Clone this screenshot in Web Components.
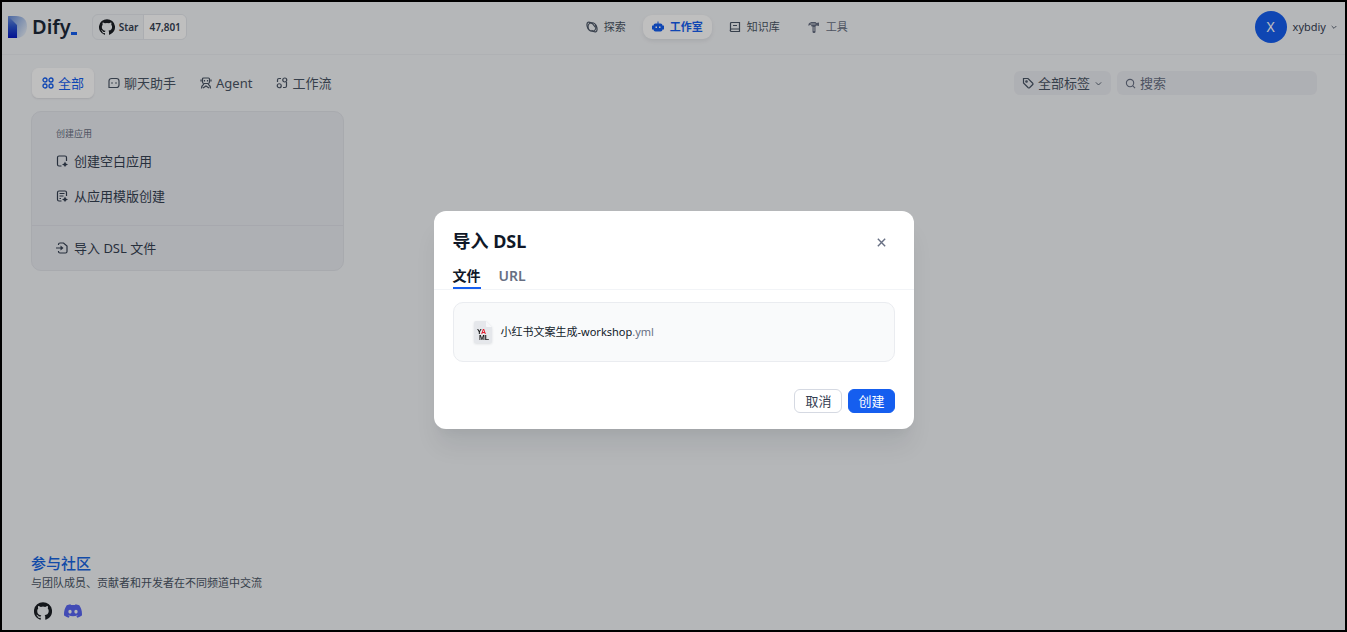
<!DOCTYPE html>
<html lang="zh-CN">
<head>
<meta charset="utf-8">
<meta name="viewport" content="width=device-width, initial-scale=1">
<title>Dify</title>
<style>
  html, body { margin: 0; }
  body { font-family: "Noto Sans", "Noto Sans CJK SC", sans-serif; color: #354052; }
</style>
</head>
<body>
<dify-app></dify-app>
<script>
const define = (name, html, setup) => customElements.define(name, class extends HTMLElement {
  connectedCallback() {
    if (this.shadowRoot) return;
    const t = document.createElement('template');
    t.innerHTML = html;
    this.attachShadow({ mode: 'open' }).append(t.content.cloneNode(true));
    if (setup) setup(this, this.shadowRoot);
  }
});

const GITHUB = '<path fill="currentColor" d="M12 .3a12 12 0 0 0-3.8 23.4c.6.1.8-.3.8-.6v-2c-3.3.7-4-1.6-4-1.6-.6-1.4-1.4-1.8-1.4-1.8-1-.7.1-.7.1-.7 1.2 0 1.9 1.2 1.9 1.2 1 1.8 2.8 1.3 3.5 1 0-.8.4-1.3.7-1.6-2.7-.3-5.5-1.3-5.5-6 0-1.2.5-2.3 1.3-3.1-.2-.4-.6-1.6 0-3.2 0 0 1-.3 3.4 1.2a11.5 11.5 0 0 1 6 0c2.3-1.5 3.3-1.2 3.3-1.2.6 1.6.2 2.8 0 3.2.9.8 1.3 1.9 1.3 3.2 0 4.6-2.8 5.6-5.5 5.9.5.4.9 1 .9 2.2v3.3c0 .3.1.7.8.6A12 12 0 0 0 12 .3"/>';
const ICONS = {
  github: GITHUB,
  discord: '<path fill="currentColor" d="M20.317 4.37a19.8 19.8 0 0 0-4.885-1.515.07.07 0 0 0-.079.037c-.21.375-.444.864-.608 1.25a18.3 18.3 0 0 0-5.487 0 12.6 12.6 0 0 0-.617-1.25.08.08 0 0 0-.079-.037A19.7 19.7 0 0 0 3.677 4.37a.07.07 0 0 0-.032.027C.533 9.046-.32 13.58.099 18.057a.08.08 0 0 0 .031.057 19.9 19.9 0 0 0 5.993 3.03.08.08 0 0 0 .084-.028c.462-.63.874-1.295 1.226-1.994a.076.076 0 0 0-.041-.106 13 13 0 0 1-1.872-.892.077.077 0 0 1-.008-.128l.372-.292a.07.07 0 0 1 .077-.01c3.928 1.793 8.18 1.793 12.062 0a.07.07 0 0 1 .078.01l.373.292a.077.077 0 0 1-.006.127 12.3 12.3 0 0 1-1.873.892.077.077 0 0 0-.041.107c.36.698.772 1.362 1.225 1.993a.08.08 0 0 0 .084.028 19.8 19.8 0 0 0 6.002-3.03.08.08 0 0 0 .032-.054c.5-5.177-.838-9.674-3.549-13.66a.06.06 0 0 0-.031-.03zM8.02 15.33c-1.183 0-2.157-1.085-2.157-2.419s.956-2.419 2.157-2.419c1.21 0 2.176 1.096 2.157 2.42 0 1.333-.956 2.418-2.157 2.418zm7.975 0c-1.183 0-2.157-1.085-2.157-2.419s.955-2.419 2.157-2.419c1.21 0 2.176 1.096 2.157 2.42 0 1.333-.946 2.418-2.157 2.418z"/>',
  explore: '<g><ellipse cx="12" cy="12" rx="8" ry="8.500"/><path d="M5 17C1 11 1 4 4 2.500 7 1.500 10 3 13 5.500L19 13M19 7c4 6 4 13 1 14.500-3 1-6-.5-9-3"/></g>',
  robot: '<g fill="currentColor" stroke="none"><path d="M11 1h2v4h4a4 4 0 0 1 4 4v8a4 4 0 0 1-4 4H7a4 4 0 0 1-4-4V9a4 4 0 0 1 4-4h4z"/><rect x="0" y="9" width="4" height="8" rx="1"/><rect x="20" y="9" width="4" height="8" rx="1"/><rect x="7" y="11" width="3" height="3" fill="#fff"/><rect x="14" y="11" width="3" height="3" fill="#fff"/></g>',
  book: '<path d="M3 20V5a2 2 0 0 1 2-2h16v18H5a2 2 0 0 1 0-5h16M8 9h8"/>',
  tool: '<path fill="currentColor" stroke="none" d="M1 10V6c2-3 5-4 8-4h6l2 2 5-1v7l-5-1-2 2v11c0 3-6 3-6 0V11H7C7 8 4 7 1 10z"/><path stroke="#f2f4f7" stroke-width="1.500" d="M5 6h10M12 12v8"/>',
  down: '<path d="m5 9 7 7 7-7"/>',
  all: '<g stroke-width="2.600"><circle cx="6" cy="6" r="4"/><circle cx="18" cy="6" r="4"/><circle cx="6" cy="18" r="4"/><circle cx="18" cy="18" r="4"/></g>',
  chat: '<path d="M2 21V8a5 5 0 0 1 5-5h10a5 5 0 0 1 5 5v8a5 5 0 0 1-5 5zM8 10.500v3M16 10.500v3"/>',
  agent: '<path d="M7 2h10a2 2 0 0 1 2 2v6a3 3 0 0 1-3 3H8a3 3 0 0 1-3-3V4a2 2 0 0 1 2-2zM9 6v3M15 6v3M2 5v4M22 5v4M3 23c0-4 2-7 5-9M21 23c0-4-2-7-5-9M6 22l6-4 6 4"/>',
  flow: '<path d="M10 3H6a3 3 0 0 0-3 3v4M14 21h4a3 3 0 0 0 3-3v-8"/><circle cx="17.500" cy="6" r="4"/><circle cx="6.500" cy="17.500" r="4"/>',
  tag: '<path d="M3 3h9l9.500 9.500a2 2 0 0 1 0 2.500L15 21.500a2 2 0 0 1-2.500 0L3 12z"/><circle cx="9" cy="9" r="1.500"/>',
  search: '<circle cx="11" cy="11" r="8"/><path d="m17 17 5 5"/>',
  blank: '<path d="M11 22H6a3 3 0 0 1-3-3V5a3 3 0 0 1 3-3h12a3 3 0 0 1 3 3v7"/><path fill="currentColor" stroke="none" d="m18 13 2 4 4 2-4 2-2 3-2-3-4-2 4-2z"/>',
  template: '<path d="M11 22H6a3 3 0 0 1-3-3V5a3 3 0 0 1 3-3h12a3 3 0 0 1 3 3v7M7 7h10M7 12h8M7 17h3"/><path fill="currentColor" stroke="none" d="m18 13 2 4 4 2-4 2-2 3-2-3-4-2 4-2z"/>',
  import: '<path d="M5 6V5a3 3 0 0 1 3-3h7l7 6v11a3 3 0 0 1-3 3H8a3 3 0 0 1-3-3v-1M0 12h12"/><path fill="currentColor" stroke="none" d="m9 7 6 5-6 5z"/>',
  close: '<path stroke-width="3" d="m4 4 16 16M20 4 4 20"/>'
};

define('ui-icon', `<style>
  :host { display: block; flex: none; width: var(--size, 12px); height: var(--size, 12px); }
  svg { display: block; width: 100%; height: 100%; }
</style>`, (host, root) => {
  const name = host.getAttribute('name');
  const stroke = name === 'github' || name === 'discord' ? 'none' : 'currentColor';
  root.innerHTML += `<svg viewBox="0 0 24 24" fill="none" stroke="${stroke}" stroke-width="2.400" aria-hidden="true">${ICONS[name]}</svg>`;
});

define('dify-logo', `<style>
  :host { display: block; }
  a { display: flex; align-items: center; gap: 5px; color: #1d2939; text-decoration: none; font-size: 20px; line-height: 24px; font-weight: 600; }
  svg { display: block; width: 19px; height: 22px; }
  .word { display: flex; align-items: center; }
  i { width: 6px; height: 3px; margin-top: 12px; background: #155eef; }
</style>
<a href="#" aria-label="Dify">
  <svg viewBox="0 0 19 22"><defs>
    <linearGradient id="bar" x1="0" y1="0" x2="0" y2="1"><stop offset="0" stop-color="#6f93dd"/><stop offset=".5" stop-color="#2a54d0"/><stop offset="1" stop-color="#0618c4"/></linearGradient>
    <linearGradient id="bow" x1="0" y1="0" x2="1" y2=".7"><stop offset="0" stop-color="#6389da"/><stop offset=".5" stop-color="#a3bce8"/><stop offset="1" stop-color="#e2eaf6"/></linearGradient></defs>
    <path fill="url(#bow)" d="M0 0h8c7 0 11 4 11 10.500S15 22 9 22z"/><path fill="url(#bar)" d="M0 0 9 9v13H0z"/>
  </svg>
  <span class="word">Dify<i></i></span>
</a>`);

define('github-star', `<style>
  :host { display: block; }
  a { display: flex; box-sizing: border-box; height: 26px; border: 1px solid #e4e7ec; border-radius: 6px; overflow: hidden; color: #354052; text-decoration: none; font-size: 10px; line-height: 24px; font-weight: 600; }
  span { display: flex; align-items: center; gap: 4px; padding: 0 5px 0 6px; }
  .count { background: #fff; border-left: 1px solid #e4e7ec; padding: 0 5px; }
  ui-icon { --size: 16px; color: #1b1f24; }
</style>
<a href="#"><span><ui-icon name="github"></ui-icon>Star</span><span class="count">47,801</span></a>`);

define('nav-item', `<style>
  :host { display: block; }
  a { display: flex; align-items: center; gap: 6px; height: 24px; padding: 0 11px; border-radius: 9px; color: #495464; text-decoration: none; font-size: 11px; line-height: 24px; font-weight: 400; }
  :host([active]) a { background: #fff; color: #155eef; font-weight: 700; box-shadow: 0 2px 4px #10182814; padding: 0 9px; }
  :host([muted]) a { color: #676f83; }
</style>
<a href="#"><ui-icon></ui-icon><slot></slot></a>`, (h, r) => r.querySelector('ui-icon').replaceWith(Object.assign(document.createElement('template'), { innerHTML: `<ui-icon name="${h.getAttribute('icon')}"></ui-icon>` }).content));

define('app-header', `<style>
  :host { display: block; border-bottom: 1px solid #eaecf0; }
  header { display: flex; align-items: center; justify-content: space-between; height: 50px; padding: 0 7px 2px 6px; }
  .left { display: flex; align-items: center; gap: 15px; }
  nav { display: flex; gap: 6px; }
  button { display: flex; align-items: center; gap: 6px; border: 0; padding: 0 0 0 8px; background: none; color: #354052; font: inherit; font-size: 11px; line-height: 20px; }
  .avatar { width: 32px; height: 32px; border-radius: 16px; background: #155eef; color: #fff; text-align: center; font-size: 14px; line-height: 32px; }
  .name { display: flex; align-items: center; gap: 4px; }
  .name ui-icon { --size: 8px; }
</style>
<header>
  <div class="left"><dify-logo></dify-logo><github-star></github-star></div>
  <nav>
    <nav-item icon="explore">探索</nav-item>
    <nav-item icon="robot" active>工作室</nav-item>
    <nav-item icon="book">知识库</nav-item>
    <nav-item icon="tool" muted>工具</nav-item>
  </nav>
  <button type="button"><span class="avatar">X</span><span class="name">xybdiy<ui-icon name="down"></ui-icon></span></button>
</header>`);

define('type-tab', `<style>
  :host { display: block; }
  button { display: flex; align-items: center; gap: 4px; height: 30px; padding: 0 9px; border: 1px solid transparent; border-radius: 6px; background: none; color: #495464; font: inherit; font-size: 13px; line-height: 20px; }
  :host([active]) button { background: #fff; border-color: #fff; color: #155eef; box-shadow: 0 1px 2px #1018281a; }
</style>
<button type="button"><slot name="icon"></slot><slot></slot></button>`);

define('app-toolbar', `<style>
  :host { display: flex; align-items: center; justify-content: space-between; }
  .tabs { display: flex; gap: 4px; padding-left: 1px; }
  .filters { display: flex; gap: 6px; }
  label { display: flex; align-items: center; gap: 4px; box-sizing: border-box; height: 24px; padding: 0 8px; border-radius: 6px; background: #e9ebf0; color: #495464; }
  select, input { appearance: none; border: 0; margin: 0; padding: 0; outline: 0; background: none; color: inherit; font: inherit; font-size: 13px; line-height: 20px; height: 20px; }
  select { width: 52px; }
  input { flex: 1; min-width: 0; }
  input::placeholder { color: #676f83; opacity: 1; }
  .search { width: 200px; color: #676f83; }
  .chev { --size: 9px; }
</style>
<div class="tabs">
  <type-tab active><ui-icon slot="icon" name="all"></ui-icon>全部</type-tab>
  <type-tab><ui-icon slot="icon" name="chat"></ui-icon>聊天助手</type-tab>
  <type-tab><ui-icon slot="icon" name="agent"></ui-icon>Agent</type-tab>
  <type-tab><ui-icon slot="icon" name="flow"></ui-icon>工作流</type-tab>
</div>
<div class="filters">
  <label><ui-icon name="tag"></ui-icon><select aria-label="标签"><option>全部标签</option></select><ui-icon class="chev" name="down"></ui-icon></label>
  <label class="search"><ui-icon name="search" style="--size:11px"></ui-icon><input type="text" placeholder="搜索" aria-label="搜索"></label>
</div>`);

define('create-card', `<style>
  :host { display: block; border: 1px solid #e0e3e9; border-radius: 10px; background: #e9ebf0; }
  .group { padding: 12px 24px; }
  h2 { margin: 0; font-size: 9px; line-height: 19px; font-weight: 400; color: #676f83; }
  button { display: flex; align-items: center; gap: 6px; height: 35px; padding: 0; border: 0; background: none; color: #354052; font: inherit; font-size: 13px; line-height: 20px; }
  .import { border-top: 1px solid #dfe1e8; padding: 4px 24px 5px; }
</style>
<div class="group">
  <h2>创建应用</h2>
  <button type="button"><ui-icon name="blank"></ui-icon>创建空白应用</button>
  <button type="button"><ui-icon name="template"></ui-icon>从应用模版创建</button>
</div>
<div class="import"><button type="button"><ui-icon name="import"></ui-icon>导入 DSL 文件</button></div>`);

define('community-footer', `<style>
  :host { display: block; }
  h3 { margin: 0; font-size: 15px; line-height: 22px; font-weight: 500; color: #1764e0; }
  p { margin: 0; font-size: 11px; line-height: 18px; color: #495464; }
  .links { display: flex; gap: 12px; padding: 10px 3px; }
  a { display: block; color: #1b1f24; }
  a + a { color: #5865f2; }
  ui-icon { --size: 18px; }
</style>
<h3>参与社区</h3>
<p>与团队成员、贡献者和开发者在不同频道中交流</p>
<div class="links"><a href="#" aria-label="GitHub"><ui-icon name="github"></ui-icon></a><a href="#" aria-label="Discord"><ui-icon name="discord"></ui-icon></a></div>`);

define('yaml-icon', `<style>
  :host { display: block; flex: none; width: 18px; height: 24px; }
  svg { display: block; overflow: visible; filter: drop-shadow(0 1px 1px #10182820); }
  text { font: 700 7px "Liberation Sans", sans-serif; fill: #111; }
  .red { fill: #e11d2e; }
</style>
<svg width="18" height="24" viewBox="0 0 18 24" aria-hidden="true">
  <path fill="#e5e7eb" d="M2 1h10l6 6v14a2 2 0 0 1-2 2H2a2 2 0 0 1-2-2V3a2 2 0 0 1 2-2z"/><path fill="#f7f8fa" d="m12 1 6 6h-5a1 1 0 0 1-1-1z"/>
  <text x="3" y="14">Y<tspan class="red">A</tspan></text><text x="5" y="20">ML</text>
</svg>`);

define('import-dialog', `<style>
  :host { display: flex; align-items: center; justify-content: center; position: absolute; inset: 0; box-sizing: border-box; padding-top: 8px; background: #00000040; }
  section { box-sizing: border-box; width: 480px; max-width: 100%; border-radius: 12px; background: #fff; box-shadow: 0 20px 24px -4px #10182814, 0 8px 8px -4px #10182808; color: #101828; }
  header { display: flex; align-items: center; justify-content: space-between; padding: 18px 27px 5px 19px; }
  h1 { margin: 0; font-size: 18px; line-height: 24px; font-weight: 700; }
  button { font: inherit; box-sizing: border-box; }
  .close { padding: 2px 0 0; border: 0; background: none; color: #676f83; }
  .close ui-icon { --size: 11px; }
  .tabs { display: flex; gap: 18px; height: 31px; padding: 0 19px; border-bottom: 1px solid #f2f4f7; }
  .tabs button { padding: 6px 0 0; border: 0; border-bottom: 2px solid transparent; background: none; color: #676f83; font-size: 14px; line-height: 20px; font-weight: 600; }
  .tabs [aria-selected=true] { border-color: #155eef; color: #101828; }
  .file { display: flex; align-items: center; gap: 9px; box-sizing: border-box; height: 60px; margin: 12px 19px 0; padding: 0 20px; border: 1px solid #eaecf0; border-radius: 10px; background: #f9fafb; font-size: 11px; line-height: 18px; }
  .ext { color: #676f83; }
  footer { display: flex; justify-content: flex-end; gap: 6px; padding: 27px 19px 16px; }
  footer button { height: 24px; padding: 0 10px; border: 1px solid #d5d9e2; border-radius: 6px; background: #fff; color: #354052; font-size: 13px; line-height: 20px; }
  footer .primary { border-color: #155eef; background: #155eef; color: #fff; padding: 0 9px; }
</style>
<section role="dialog" aria-labelledby="title">
  <header><h1 id="title">导入 DSL</h1><button class="close" type="button" aria-label="关闭"><ui-icon name="close"></ui-icon></button></header>
  <div class="tabs" role="tablist"><button type="button" role="tab" aria-selected="true">文件</button><button type="button" role="tab" aria-selected="false">URL</button></div>
  <div class="file"><yaml-icon></yaml-icon><span>小红书文案生成-workshop<span class="ext">.yml</span></span></div>
  <footer><button type="button">取消</button><button type="button" class="primary">创建</button></footer>
</section>`);

define('dify-app', `<style>
  :host { display: flex; flex-direction: column; position: relative; box-sizing: border-box; min-height: 100vh; border: 2px solid #000; background: #f2f4f7; }
  main { display: flex; flex-direction: column; flex: 1; padding: 13px 28px 0 29px; }
  .grid { display: grid; grid-template-columns: repeat(4, 1fr); gap: 11px; margin-top: 13px; }
  community-footer { margin-top: auto; }
</style>
<app-header></app-header>
<main>
  <app-toolbar></app-toolbar>
  <div class="grid"><create-card></create-card></div>
  <community-footer></community-footer>
</main>
<import-dialog></import-dialog>`);
</script>
</body>
</html>
